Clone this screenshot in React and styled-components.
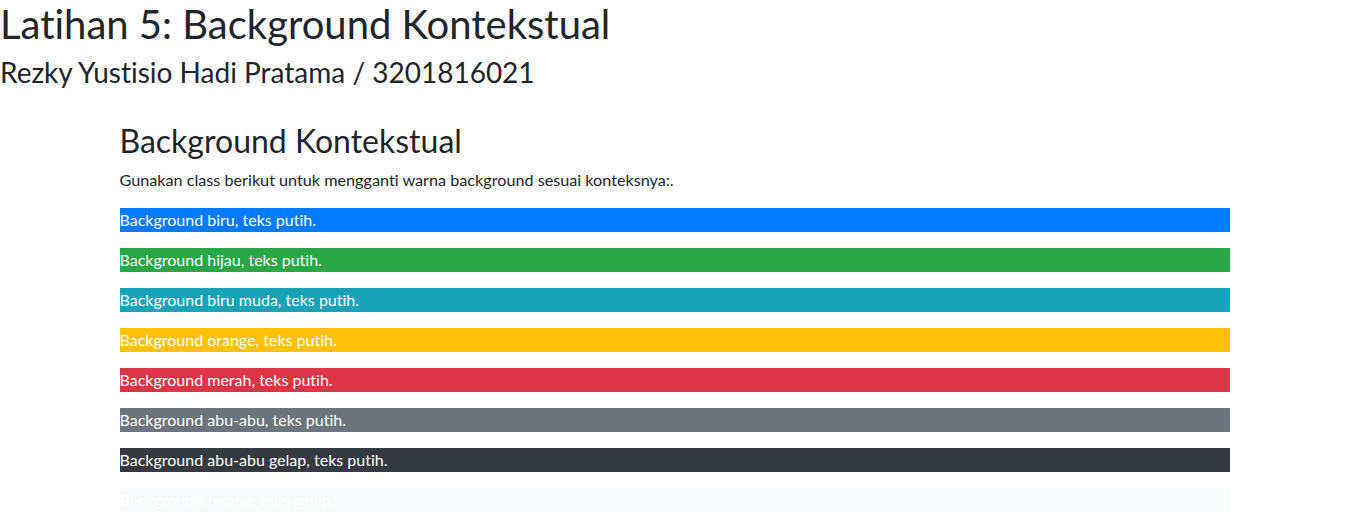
import React from 'react';
import styled, { createGlobalStyle } from 'styled-components';

const Global = createGlobalStyle`
  body {
    margin: 0;
    font-family: Lato, "Open Sans", sans-serif;
    font-variant-ligatures: none;
    font-size: 16px;
    line-height: 1.5;
    color: #212529;
    background: #fff;
  }
`;

const Title = styled.h1`
  margin: 0 0 8px;
  font-size: 40px;
  font-weight: 400;
  line-height: 48px;
`;

const Subtitle = styled.h3`
  margin: 0 0 8px;
  font-size: 28px;
  font-weight: 400;
  line-height: 33.6px;
`;

const Container = styled.div`
  max-width: 1110px;
  margin: 0 auto;
  padding: 24px 15px 0;
`;

const Heading = styled.h2`
  margin: 0 0 8px;
  font-size: 32px;
  font-weight: 400;
  line-height: 38.4px;
`;

const Lead = styled.p`
  margin: 0 0 16px;
  font-size: 16.2px;
`;

const Bar = styled.p`
  margin: 0 0 16px;
  background: ${(p) => p.bg};
  color: #fff;
  line-height: 24px;
`;

const bars = [
  ['#007bff', 'Background biru, teks putih.'],
  ['#28a745', 'Background hijau, teks putih.'],
  ['#17a2b8', 'Background biru muda, teks putih.'],
  ['#ffc107', 'Background orange, teks putih.'],
  ['#dc3545', 'Background merah, teks putih.'],
  ['#6c757d', 'Background abu-abu, teks putih.'],
  ['#343a40', 'Background abu-abu gelap, teks putih.'],
  ['#f8f9fa', 'Background terang, teks gelap.'],
];

export default function App() {
  return (
    <>
      <Global />
      <Title>Latihan 5: Background Kontekstual</Title>
      <Subtitle>Rezky Yustisio Hadi Pratama / 3201816021</Subtitle>
      <Container>
        <Heading>Background Kontekstual</Heading>
        <Lead>Gunakan class berikut untuk mengganti warna background sesuai konteksnya:.</Lead>
        {bars.map(([bg, text]) => (
          <Bar key={bg} bg={bg}>{text}</Bar>
        ))}
      </Container>
    </>
  );
}
